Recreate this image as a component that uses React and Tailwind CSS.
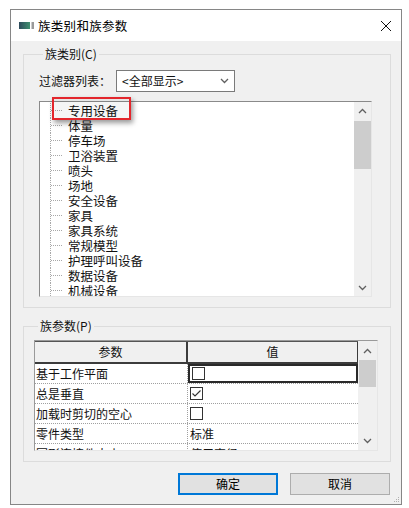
import React from 'react';

const categories = [
  '专用设备',
  '体量',
  '停车场',
  '卫浴装置',
  '喷头',
  '场地',
  '安全设备',
  '家具',
  '家具系统',
  '常规模型',
  '护理呼叫设备',
  '数据设备',
  '机械设备',
];

const params = [
  { name: '基于工作平面', type: 'check', checked: false, focused: true },
  { name: '总是垂直', type: 'check', checked: true },
  { name: '加载时剪切的空心', type: 'check', checked: false },
  { name: '零件类型', type: 'text', value: '标准' },
  { name: '圆形连接件大小', type: 'text', value: '使用直径' },
];

function Chevron({ up, className = '' }) {
  return (
    <svg width="9" height="6" viewBox="0 0 9 6" className={className}>
      <polyline
        points={up ? '1,5 4.5,1.5 8,5' : '1,1 4.5,4.5 8,1'}
        fill="none"
        stroke="#606060"
        strokeWidth="1.3"
      />
    </svg>
  );
}

function Checkbox({ checked }) {
  return (
    <div className="ml-[2px] w-[13px] h-[13px] border border-[#333] bg-white flex items-center justify-center">
      {checked && (
        <svg width="11" height="11" viewBox="0 0 11 11">
          <polyline points="1.5,5.5 4,8 9.5,2.5" fill="none" stroke="#333" strokeWidth="1.1" />
        </svg>
      )}
    </div>
  );
}

function Button({ children, primary }) {
  return (
    <button
      className={`w-[100px] h-[22px] bg-[#e1e1e1] text-[12px] leading-none text-black flex items-center justify-center ${
        primary ? 'border-2 border-[#0078d7]' : 'border border-[#adadad]'
      }`}
    >
      {children}
    </button>
  );
}

export default function App() {
  return (
    <div className="w-[409px] h-[508px] bg-white pt-[9px] pl-[10px] font-['Noto_Sans_CJK_SC','Noto_Sans',sans-serif] text-[#111]">
      <div className="relative w-[392px] h-[496px] border border-[#868686] flex flex-col">
        {/* title bar */}
        <div className="h-[31px] bg-white flex items-center pl-[8px] pr-[8px]">
          <svg width="15" height="7" viewBox="0 0 15 7">
            <defs>
              <linearGradient id="ic" x1="0" x2="1" y1="0" y2="0">
                <stop offset="0" stopColor="#2e4a5c" />
                <stop offset="1" stopColor="#3f9070" />
              </linearGradient>
            </defs>
            <rect x="0" y="0" width="11" height="7" fill="url(#ic)" />
            <rect x="12.5" y="0" width="2.5" height="7" fill="#9a9a9a" />
          </svg>
          <span className="ml-[4px] text-[12.5px] leading-[16px] tracking-[0.3px] text-black">族类别和族参数</span>
          <svg width="12" height="12" viewBox="0 0 12 12" className="ml-auto mr-[1px]">
            <path d="M1 1 L11 11 M11 1 L1 11" stroke="#111" strokeWidth="1" />
          </svg>
        </div>

        {/* body */}
        <div className="flex-1 bg-[#f0f0f0] flex flex-col pl-[12px] pr-[10px]">
          <fieldset className="mt-[5px] border border-[#dcdcdc] pl-[15px] pt-[8px] pb-[10px]">
            <legend className="ml-[4px] px-[2px] text-[12px] leading-[16px]">族类别(C)</legend>
            <div className="flex items-center h-[22px]">
              <span className="w-[77px] text-[12px] leading-[16px]">过滤器列表：</span>
              <div className="w-[119px] h-[22px] border border-[#7a7a7a] bg-white flex items-center pl-[5px] pr-[5px]">
                <span className="text-[12px] leading-[16px]">&lt;全部显示&gt;</span>
                <Chevron className="ml-auto" />
              </div>
            </div>

            <div className="relative mt-[9px] w-[333px] h-[196px] border-t border-l border-[#8a8a8a] border-r border-b border-r-[#e6e6e6] border-b-[#e6e6e6] bg-white flex">
              <div className="flex-1 overflow-hidden pt-[1px]">
                {categories.map((c) => (
                  <div key={c} className="flex h-[15px] items-center">
                    <div className="w-[10px]" />
                    <div className="w-[12px] h-full border-l border-dotted border-[#a8a8a8] flex items-center">
                      <div className="w-full border-t border-dotted border-[#a8a8a8]" />
                    </div>
                    <span className="relative ml-[6px] text-[12.5px] leading-[15px] whitespace-nowrap">{c}</span>
                  </div>
                ))}
              </div>
              <div className="w-[17px] bg-[#f0f0f0] flex flex-col">
                <div className="h-[17px] flex items-center justify-center">
                  <Chevron up />
                </div>
                <div className="mt-[2px] h-[48px] bg-[#cdcdcd]" />
                <div className="mt-auto h-[17px] flex items-center justify-center">
                  <Chevron />
                </div>
              </div>
              {/* highlight annotation */}
              <div className="absolute left-[12px] top-[-5px] w-[79px] h-[23px] border-2 border-[#e3262c] bg-black/[0.04] shadow-[2px_3px_5px_rgba(0,0,0,0.4)]" />
            </div>
          </fieldset>

          <fieldset className="mt-[10px] border border-[#dcdcdc] pl-[10px] pt-[6px] pb-[10px]">
            <legend className="ml-[4px] px-[2px] text-[12px] leading-[16px]">族参数(P)</legend>
            <div className="w-[344px] h-[111px] border-t border-l border-[#9a9a9a] border-r border-b border-r-[#e6e6e6] border-b-[#e6e6e6] bg-white flex">
              <div className="w-[323px] overflow-hidden flex flex-col">
                <div className="flex h-[23px] shrink-0 bg-[#f0f0f0] border-t border-[#555]">
                  <div className="w-[153px] border-r-2 border-b-2 border-[#3c3c3c] flex items-center justify-center text-[12px] leading-[16px]">
                    参数
                  </div>
                  <div className="flex-1 border-r border-b-2 border-[#3c3c3c] flex items-center justify-center text-[12px] leading-[16px]">
                    值
                  </div>
                </div>
                {params.map((p) => (
                  <div key={p.name} className="flex h-[20px] shrink-0 border-b border-dotted border-[#a0a0a0]">
                    <div className="w-[153px] border-r border-dotted border-[#a0a0a0] flex items-center pl-[1px] text-[12px] leading-[16px] whitespace-nowrap">
                      {p.name}
                    </div>
                    <div
                      className={`flex-1 flex items-center text-[12px] leading-[16px] ${
                        p.focused ? 'border-2 border-[#2a2a2a]' : ''
                      }`}
                    >
                      {p.type === 'check' ? (
                        <Checkbox checked={p.checked} />
                      ) : (
                        <span className="pl-[2px]">{p.value}</span>
                      )}
                    </div>
                  </div>
                ))}
              </div>
              <div className="flex-1 bg-[#f0f0f0] flex flex-col">
                <div className="h-[19px] flex items-center justify-center">
                  <Chevron up />
                </div>
                <div className="h-[27px] mx-[1px] bg-[#cdcdcd]" />
                <div className="mt-auto h-[19px] flex items-center justify-center">
                  <Chevron />
                </div>
              </div>
            </div>
          </fieldset>

          <div className="mt-[11px] flex justify-end gap-[12px] pr-[1px]">
            <Button primary>确定</Button>
            <Button>取消</Button>
          </div>
        </div>

        {/* resize grip */}
        <svg width="7" height="7" viewBox="0 0 7 7" className="absolute right-[1px] bottom-[1px]">
          <rect x="5" y="1" width="1" height="1" fill="#b0b0b0" />
          <rect x="3" y="3" width="1" height="1" fill="#b0b0b0" />
          <rect x="5" y="3" width="1" height="1" fill="#b0b0b0" />
          <rect x="1" y="5" width="1" height="1" fill="#b0b0b0" />
          <rect x="3" y="5" width="1" height="1" fill="#b0b0b0" />
          <rect x="5" y="5" width="1" height="1" fill="#b0b0b0" />
        </svg>
      </div>
    </div>
  );
}
